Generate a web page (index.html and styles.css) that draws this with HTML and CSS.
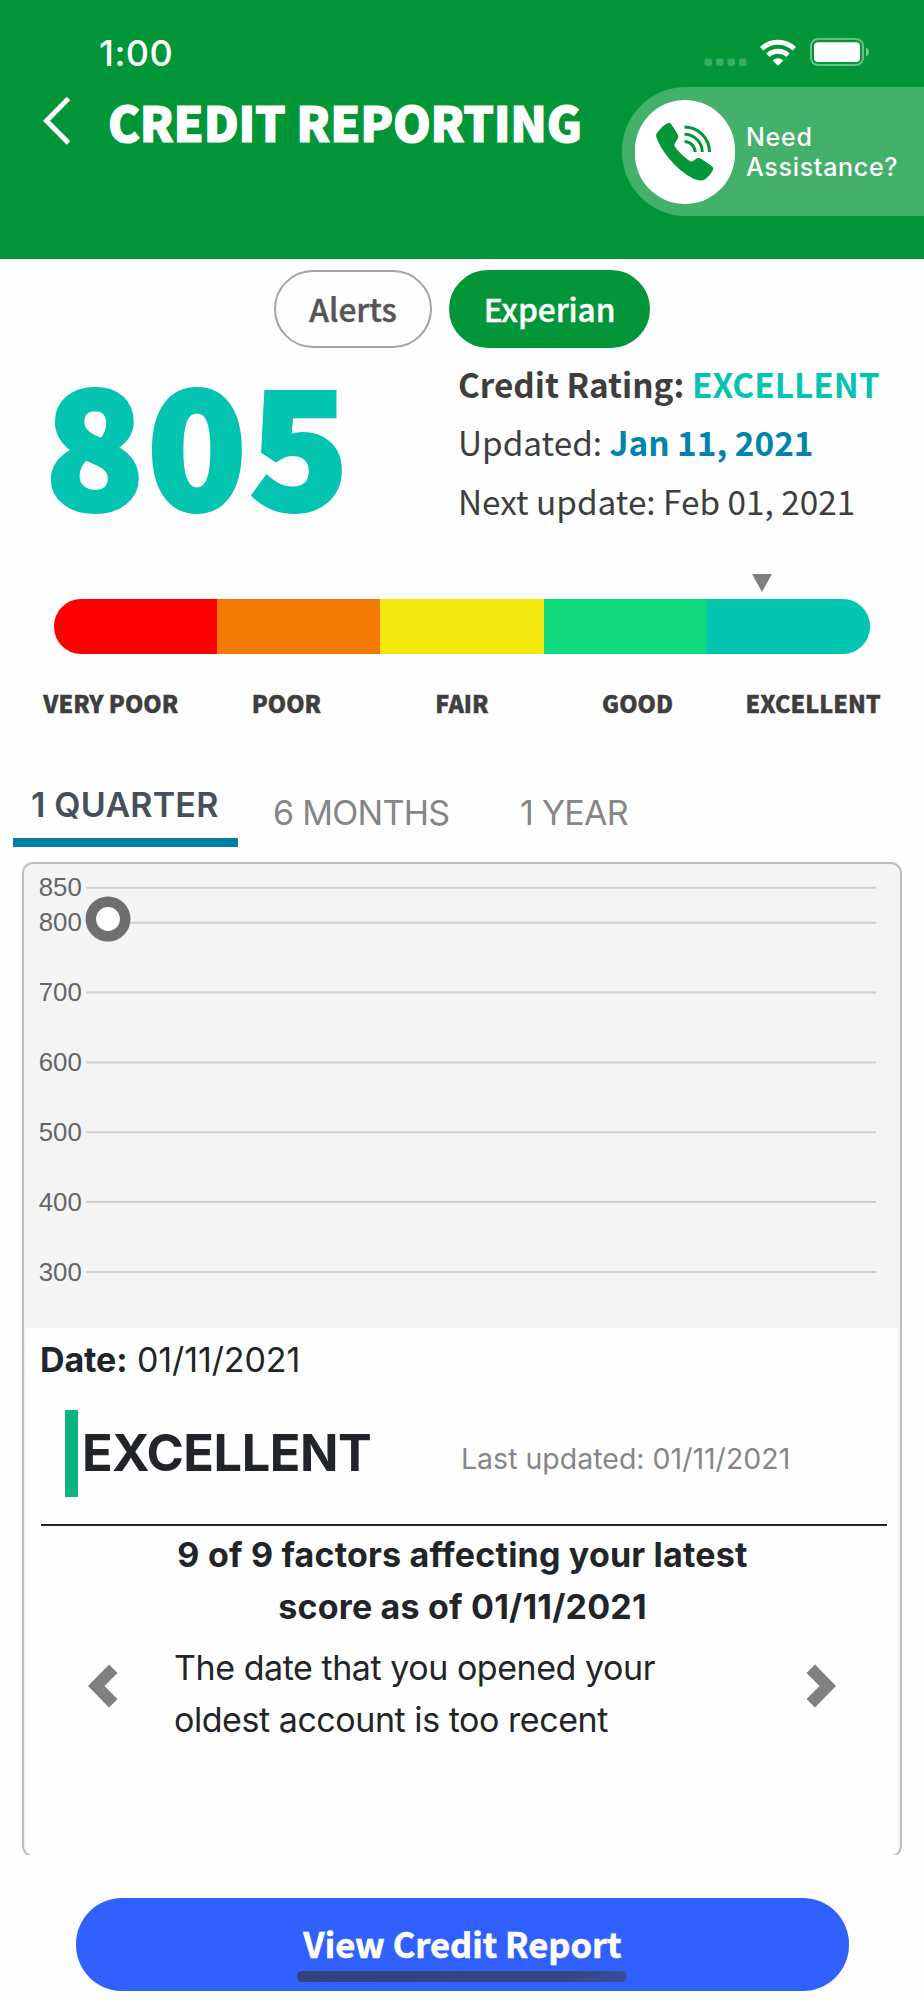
FILE: index.html
```html
<!DOCTYPE html>
<html lang="en">
<head>
    <meta charset="UTF-8">
    <meta name="viewport" content="width=device-width, initial-scale=1.0">
    <title>Credit Reporting</title>
    <link rel="stylesheet" href="styles.css">
</head>
<body>
    <header class="header">
        <div class="status-bar">
            <span class="time">1:00</span>
            <svg class="status-icons" width="168" height="32" viewBox="0 0 168 32">
                <g fill="#fff" opacity="0.22">
                    <rect x="4.5" y="22.5" width="7.5" height="7.5" rx="2"/>
                    <rect x="16" y="22.5" width="7.5" height="7.5" rx="2"/>
                    <rect x="27.5" y="22.5" width="7.5" height="7.5" rx="2"/>
                    <rect x="39" y="22.5" width="7.5" height="7.5" rx="2"/>
                </g>
                <g fill="none" stroke="#fff" stroke-width="5">
                    <path d="M61.7 12.8 A23.5 23.5 0 0 1 94.3 12.8"/>
                    <path d="M68 19.3 A14.6 14.6 0 0 1 88 19.3"/>
                </g>
                <path d="M78 29.8 L72.6 24.4 Q78 20 83.4 24.4 Z" fill="#fff"/>
                <rect x="111" y="3" width="52" height="26" rx="7" fill="none" stroke="#fff" stroke-width="2" opacity="0.4"/>
                <rect x="114" y="6.3" width="46" height="19.6" rx="4" fill="#fff"/>
                <path d="M166 11.5 Q169 13 169 16 Q169 19 166 20.5 Z" fill="#fff" opacity="0.45"/>
            </svg>
        </div>
        <div class="header-row">
            <svg class="back" width="28" height="48" viewBox="0 0 28 48">
                <path d="M25.5 1.5 L3.5 23.7 L25.5 46" fill="none" stroke="#fff" stroke-width="5"/>
            </svg>
            <h1 class="title">CREDIT REPORTING</h1>
            <div class="assist">
                <span class="assist-icon">
                    <svg width="60" height="60" viewBox="0 0 60 60">
                        <path d="M2 11 Q7 4 13 1 Q15 0.3 16.5 2.5 L22.5 12 Q24 14.5 22.5 17 L19.5 22 Q19 23.5 20 25 Q27 34 35.5 39.5 Q37 39.8 38 39 L42 36.3 Q44 35.5 46 36.8 L56 43.5 Q59 45.5 58 48 Q55 54 50 57.5 Q46 59.5 39 57 Q25 50 14 36.5 Q4 24 1 14 Q1 12 2 11 Z" fill="#029639"/>
                        <g fill="none" stroke="#029639" stroke-width="3">
                            <path d="M29.5 5 A25 25 0 0 1 54.5 30"/>
                            <path d="M29.5 12.3 A17.7 17.7 0 0 1 47.2 30"/>
                            <path d="M29.5 19.5 A10.5 10.5 0 0 1 40 30"/>
                        </g>
                    </svg>
                </span>
                <span class="assist-text">Need<br>Assistance?</span>
            </div>
        </div>
    </header>

    <div class="bureaus">
        <button class="bureau-btn">Alerts</button>
        <button class="bureau-btn active">Experian</button>
    </div>

    <section class="summary">
        <div class="score">805</div>
        <div class="details">
            <p><b>Credit Rating: <span class="teal">EXCELLENT</span></b></p>
            <p>Updated: <b class="blue">Jan 11, 2021</b></p>
            <p>Next update: Feb 01, 2021</p>
        </div>
    </section>

    <section class="meter">
        <div class="marker"></div>
        <div class="meter-bar">
            <div class="very-poor"></div>
            <div class="poor"></div>
            <div class="fair"></div>
            <div class="good"></div>
            <div class="excellent"></div>
        </div>
        <div class="meter-labels">
            <span>VERY POOR</span>
            <span>POOR</span>
            <span>FAIR</span>
            <span>GOOD</span>
            <span>EXCELLENT</span>
        </div>
    </section>

    <nav class="tabs">
        <a class="tab selected">1 QUARTER</a>
        <a class="tab months">6 MONTHS</a>
        <a class="tab">1 YEAR</a>
    </nav>

    <div class="card-wrap">
        <div class="card">
            <svg class="chart" width="876" height="464" viewBox="24 864 876 464">
                <g stroke="#cfcfcf" stroke-width="2">
                    <path d="M86 887.8H876"/>
                    <path d="M86 922.8H876"/>
                    <path d="M86 992.6H876"/>
                    <path d="M86 1062.4H876"/>
                    <path d="M86 1132.2H876"/>
                    <path d="M86 1202H876"/>
                    <path d="M86 1272H876"/>
                </g>
                <g class="axis">
                    <text x="38.7" y="896.3">850</text>
                    <text x="38.7" y="931.3">800</text>
                    <text x="38.7" y="1001.1">700</text>
                    <text x="38.7" y="1070.9">600</text>
                    <text x="38.7" y="1140.7">500</text>
                    <text x="38.7" y="1210.5">400</text>
                    <text x="38.7" y="1280.5">300</text>
                </g>
                <circle cx="108" cy="919" r="17.2" fill="#fff" stroke="#6f6f6f" stroke-width="10.6"/>
            </svg>
            <div class="card-body">
                <p class="date"><b>Date:</b> 01/11/2021</p>
                <div class="status">
                    <div class="status-line"></div>
                    <h2 class="status-name">EXCELLENT</h2>
                    <span class="last-updated">Last updated: 01/11/2021</span>
                </div>
                <h3 class="factors-title">9 of 9 factors affecting your latest<br>score as of 01/11/2021</h3>
                <div class="factor">
                    <svg class="arrow" width="30" height="44" viewBox="0 0 30 44">
                        <path d="M21 0.5 L29.5 9 L16.5 22 L29.5 35 L21 43.5 L0 22 Z" fill="#808080"/>
                    </svg>
                    <p class="factor-text">The date that you opened your<br>oldest account is too recent</p>
                    <svg class="arrow" width="30" height="44" viewBox="0 0 30 44">
                        <path d="M9 0.5 L0.5 9 L13.5 22 L0.5 35 L9 43.5 L30 22 Z" fill="#808080"/>
                    </svg>
                </div>
            </div>
        </div>
    </div>

    <button class="report-btn">View Credit Report</button>
    <div class="home-indicator"></div>
</body>
</html>
```

FILE: styles.css
```css
*{
    box-sizing: border-box;
    margin: 0;
    padding: 0;
}
body{
    position: relative;
    width: 924px;
    height: 2000px;
    overflow: hidden;
    background-color: #fefefe;
    color: #3e3e3e;
    font-family: "Noto Sans CJK JP", "Open Sans", sans-serif;
}
svg{
    display: block;
    flex-shrink: 0;
}
button{
    font-family: inherit;
}

/* header */
.header{
    height: 259px;
    background-color: #029639;
    color: white;
}
.status-bar{
    display: flex;
    justify-content: space-between;
    height: 87px;
    padding: 33px 56px 0 99px;
}
.time{
    font-family: Inter, sans-serif;
    font-size: 36px;
    font-weight: 500;
    line-height: 40px;
    letter-spacing: 0.5px;
}
.status-icons{
    margin-top: 3px;
    overflow: visible;
}
.header-row{
    display: flex;
}
.back{
    margin: 10px 0 0 43px;
}
.title{
    margin: 4px 0 0 37px;
    width: 514px;
    font-size: 48px;
    font-weight: 900;
    line-height: 60px;
    letter-spacing: -0.2px;
    white-space: nowrap;
    -webkit-text-stroke: 1.2px white;
}
.assist{
    display: flex;
    align-items: center;
    flex: 1;
    height: 129px;
    padding-left: 13px;
    background-color: #43b16c;
    border-radius: 64px 0 0 64px;
}
.assist-icon{
    display: flex;
    justify-content: center;
    align-items: center;
    flex-shrink: 0;
    width: 100px;
    height: 104px;
    border-radius: 50px;
    background-color: white;
}
.assist-text{
    margin-left: 11px;
    font-family: Inter, sans-serif;
    font-size: 25px;
    font-weight: 500;
    line-height: 30px;
    letter-spacing: 0.7px;
}

/* alerts / bureau buttons */
.bureaus{
    display: flex;
    justify-content: center;
    gap: 17px;
    margin-top: 11px;
}
.bureau-btn{
    width: 158px;
    height: 78px;
    border: 2px solid #a3a3a3;
    border-radius: 39px;
    background-color: transparent;
    color: #555;
    font-size: 31.7px;
    font-weight: 500;
    line-height: 70px;
    padding-bottom: 2px;
    -webkit-text-stroke: 0.4px;
}
.bureau-btn.active{
    width: 201px;
    border-color: #029639;
    background-color: #029639;
    color: white;
    letter-spacing: -0.1px;
}

/* score */
.summary{
    display: flex;
    height: 226px;
}
.score{
    width: 458px;
    padding: 1px 0 0 45px;
    color: #03c4b0;
    font-size: 163px;
    font-weight: 900;
    line-height: 180px;
    letter-spacing: 3px;
    -webkit-text-stroke: 4px #03c4b0;
}
.details{
    padding-top: 7px;
    font-size: 33.35px;
    line-height: 58.4px;
    white-space: nowrap;
}
.teal{
    color: #03c4b0;
}
.blue{
    color: #0083ac;
}

/* rating meter */
.meter{
    height: 190px;
}
.marker{
    width: 0;
    margin-left: 752px;
    border-left: 10.5px solid transparent;
    border-right: 10.5px solid transparent;
    border-top: 18px solid #808080;
}
.meter-bar{
    display: flex;
    height: 55px;
    margin: 7px 54px 0;
    border-radius: 27px;
    overflow: hidden;
}
.meter-bar div{
    flex: 1;
}
.very-poor{ background-color: #ff0000; }
.poor{ background-color: #f27a03; }
.fair{ background-color: #f5e80e; }
.good{ background-color: #0fdb7c; }
.excellent{ background-color: #03c4b0; }
.meter-labels{
    display: flex;
    margin: 33px 23px 0;
    font-size: 23.4px;
    font-weight: 900;
    line-height: 32px;
    text-align: center;
    -webkit-text-stroke: 0.4px;
}
.meter-labels span{
    flex: 1;
}

/* tabs */
.tabs{
    display: flex;
    height: 98px;
    padding-left: 13px;
    font-family: Inter, sans-serif;
    font-size: 34px;
    line-height: 40px;
    white-space: nowrap;
}
.tab{
    padding-top: 29px;
    color: #868686;
    font-weight: 400;
    letter-spacing: -0.7px;
}
.selected{
    width: 225px;
    height: 83px;
    padding: 21px 0 0 18px;
    border-bottom: 9px solid #007ea8;
    color: #47505a;
    font-weight: 600;
    letter-spacing: 0.2px;
}
.months{
    width: 247px;
    margin-left: 35px;
}

/* card */
.card-wrap{
    height: 993px;
    margin: 0 22px;
    overflow: hidden;
}
.card{
    height: 995px;
    border: 2px solid #bdbdbd;
    border-radius: 11px;
    background-color: #f4f4f4;
    overflow: hidden;
}
.axis{
    fill: #666;
    font-family: "Liberation Sans", Arial, sans-serif;
    font-size: 25.8px;
}
.card-body{
    height: 531px;
    margin: 0 2px;
    padding: 0 11px 0 15px;
    background-color: #fefefe;
    color: #212529;
    font-family: Inter, sans-serif;
    font-size: 34px;
    line-height: 52px;
    white-space: nowrap;
}
.date{
    margin-left: -1px;
    padding-top: 6px;
    letter-spacing: -0.1px;
}
.status{
    display: flex;
    height: 116px;
    margin-top: 24px;
    padding-left: 24px;
    border-bottom: 2px solid #212529;
}
.status-line{
    width: 13px;
    height: 87px;
    background-color: #0bb381;
}
.status-name{
    width: 383px;
    padding-left: 4px;
    font-size: 50.5px;
    font-weight: 700;
    line-height: 86px;
    letter-spacing: -0.45px;
}
.last-updated{
    color: #868686;
    font-size: 28.5px;
    line-height: 97px;
}
.factors-title{
    margin-left: -3px;
    padding-top: 3px;
    font-size: 34px;
    font-weight: 700;
    text-align: center;
    letter-spacing: 0.2px;
}
.factor{
    display: flex;
    align-items: center;
    padding: 9px 51px 0 47px;
}
.arrow{
    margin-top: -16px;
}
.factor-text{
    flex: 1;
    padding-left: 56px;
    letter-spacing: -0.45px;
}

/* bottom */
.report-btn{
    display: block;
    width: 773px;
    height: 93px;
    margin: 43px 0 0 76px;
    padding-bottom: 3px;
    border: none;
    border-radius: 46px;
    background-color: #3061ff;
    color: white;
    font-size: 34.5px;
    font-weight: 700;
    line-height: 86px;
    -webkit-text-stroke: 0.6px;
}
.home-indicator{
    position: absolute;
    left: 297px;
    top: 1971px;
    width: 330px;
    height: 11px;
    border-radius: 6px;
    background: linear-gradient(100deg, #34427a 0%, #35457f 80%, #364f9d 100%);
}
```
